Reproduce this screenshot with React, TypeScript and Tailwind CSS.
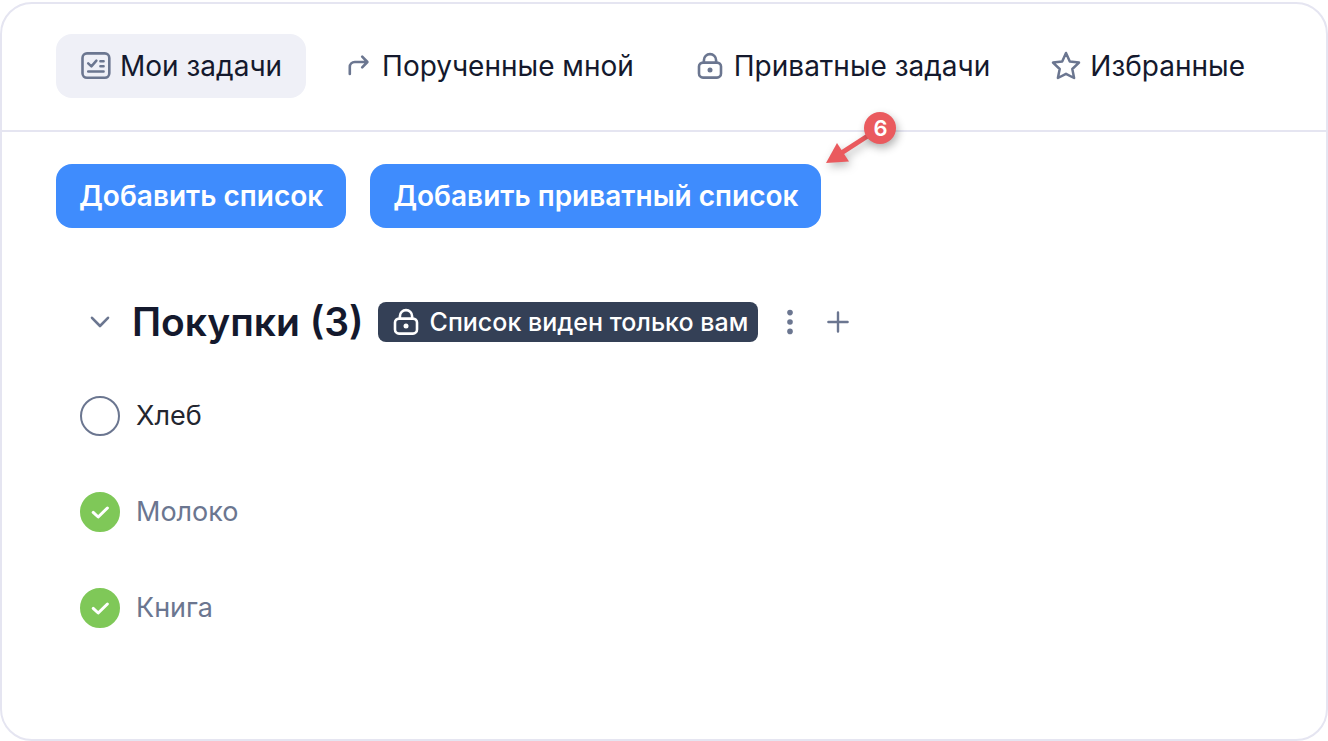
import { useState, type ReactNode } from "react";
import clsx from "clsx";

type IconProps = { className?: string };

function TasksIcon({ className }: IconProps) {
  return (
    <svg viewBox="0 0 32 32" fill="none" stroke="currentColor" strokeWidth="2.6" strokeLinecap="round" strokeLinejoin="round" className={className} aria-hidden="true">
      <rect x="2.5" y="3.4" width="26.8" height="24.4" rx="4.5" />
      <path d="M8.2 13.4l3.2 3 5-5.8M20.4 11.2h3.2M20.4 16.2h3.2M8.2 21.4h15.4" strokeWidth="2.5" />
    </svg>
  );
}

function ForwardIcon({ className }: IconProps) {
  return (
    <svg viewBox="0 0 32 32" fill="none" stroke="currentColor" strokeWidth="2.6" strokeLinecap="round" strokeLinejoin="round" className={className} aria-hidden="true">
      <path d="M7.8 24V17a5 5 0 0 1 5-5h12.2M20.2 6.6l5.2 5.4-5.2 5.4" />
    </svg>
  );
}

function LockIcon({ className }: IconProps) {
  return (
    <svg viewBox="0 0 32 32" fill="none" stroke="currentColor" strokeWidth="2.6" strokeLinecap="round" strokeLinejoin="round" className={className} aria-hidden="true">
      <rect x="5" y="12.6" width="22" height="15" rx="4" />
      <path d="M9.9 12.4v-2.2a6.1 6.1 0 0 1 12.2 0v2.2" />
      <circle cx="16" cy="20" r="2.5" fill="currentColor" stroke="none" />
    </svg>
  );
}

function StarIcon({ className }: IconProps) {
  return (
    <svg viewBox="0 0 32 32" fill="none" stroke="currentColor" strokeWidth="2.5" strokeLinejoin="round" className={className} aria-hidden="true">
      <path d="M16 3l3.8 8.5 9.2 1.1-6.7 6.4 1.8 9L16 23.8 7.9 28l1.8-9L3 12.6l9.2-1.1z" />
    </svg>
  );
}

const TABS: { id: string; label: string; icon: ReactNode }[] = [
  { id: "my", label: "Мои задачи", icon: <TasksIcon className="size-8 shrink-0 text-[#6b7690]" /> },
  { id: "assigned", label: "Порученные мной", icon: <ForwardIcon className="size-8 shrink-0 text-[#6b7690]" /> },
  { id: "private", label: "Приватные задачи", icon: <LockIcon className="size-8 shrink-0 text-[#6b7690]" /> },
  { id: "favorite", label: "Избранные", icon: <StarIcon className="size-8 shrink-0 text-[#6b7690]" /> },
];

const ITEMS = [
  { id: "bread", title: "Хлеб", done: false },
  { id: "milk", title: "Молоко", done: true },
  { id: "book", title: "Книга", done: true },
];

function Tabs() {
  const [active, setActive] = useState("my");
  return (
    <nav className="flex gap-3 border-b-2 border-[#e5e5f1] px-[54px] pt-[30px] pb-8">
      {TABS.map((tab) => (
        <button
          key={tab.id}
          type="button"
          onClick={() => setActive(tab.id)}
          className={clsx(
            "flex h-16 items-center gap-2 rounded-2xl px-6 whitespace-nowrap text-[#14192d]",
            active === tab.id && "bg-[#eff0f7]",
          )}
        >
          {tab.icon}
          {tab.label}
        </button>
      ))}
    </nav>
  );
}

// numbered marker pointing at the corner of the control it sits in
function Marker({ value }: { value: number }) {
  return (
    <div className="pointer-events-none absolute bottom-full left-full h-16 w-20 text-[#ea5a5e]">
      <svg viewBox="0 0 80 64" className="size-full overflow-visible drop-shadow-[2px_4px_4px_rgba(0,0,0,0.25)]" aria-hidden="true">
        <path d="M59 28L18 54.5" stroke="currentColor" strokeWidth="5" />
        <path d="M5 63L16 43L28 61.5z" fill="currentColor" />
      </svg>
      <span className="absolute top-3 left-[43px] flex size-8 items-center justify-center rounded-full bg-[#ea5a5e] text-[22px] leading-8 font-semibold text-white shadow-[2px_4px_8px_rgba(0,0,0,0.3)]">
        {value}
      </span>
    </div>
  );
}

function TaskRow({ id, title, done }: { id: string; title: string; done: boolean }) {
  const [checked, setChecked] = useState(done);
  return (
    <li className="flex items-center gap-4">
      <span className="relative size-10 shrink-0">
        <input
          id={id}
          type="checkbox"
          checked={checked}
          onChange={(e) => setChecked(e.target.checked)}
          className="block size-10 appearance-none rounded-full border-2 border-[#6b7690] checked:border-[#7fc858] checked:bg-[#7fc858]"
        />
        {checked && (
          <svg viewBox="0 0 40 40" fill="none" stroke="white" strokeWidth="3" strokeLinecap="round" strokeLinejoin="round" className="pointer-events-none absolute inset-0" aria-hidden="true">
            <path d="M13.2 20.4l5 4.6 9.2-9" />
          </svg>
        )}
      </span>
      <label htmlFor={id} className={clsx("text-[27px]", checked ? "text-[#6b7690]" : "text-[#23262f]")}>
        {title}
      </label>
    </li>
  );
}

export default function App() {
  const [open, setOpen] = useState(true);
  return (
    <div className="flex min-h-screen flex-col bg-white pt-[2px] font-['Inter',sans-serif] text-[28px] leading-10">
      <main className="flex-1 rounded-[32px] border-2 border-[#e5e5f1]">
        <Tabs />
        <div className="flex gap-6 px-[54px] pt-8">
          <button type="button" className="h-16 rounded-2xl bg-[#3f8cfd] px-[23px] font-semibold whitespace-nowrap text-white">
            Добавить список
          </button>
          <div className="relative">
            <button type="button" className="h-16 rounded-2xl bg-[#3f8cfd] px-[23px] font-semibold whitespace-nowrap text-white">
              Добавить приватный список
            </button>
            <Marker value={6} />
          </div>
        </div>

        <section className="px-[78px] pt-[70px] pb-16">
          <div className="flex items-center">
            <button type="button" aria-label="Свернуть" aria-expanded={open} onClick={() => setOpen(!open)} className="size-10 text-[#6b7690]">
              <svg viewBox="0 0 40 40" fill="none" stroke="currentColor" strokeWidth="2.6" strokeLinecap="round" strokeLinejoin="round" aria-hidden="true">
                <path d="M12 15.8l8 8.2 8-8.2" />
              </svg>
            </button>
            <h2 className="ml-3 text-[39px] leading-12 font-semibold whitespace-nowrap text-[#14192d]">Покупки (3)</h2>
            <span className="ml-[14px] flex h-10 items-center gap-2 rounded-lg bg-[#344056] pr-[10px] pl-3 text-[25px] font-medium whitespace-nowrap text-white">
              <LockIcon className="size-8 shrink-0" />
              Список виден только вам
            </span>
            <button type="button" aria-label="Меню" className="ml-3 size-10 text-[#6b7690]">
              <svg viewBox="0 0 40 40" fill="currentColor" aria-hidden="true">
                <circle cx="20" cy="10.6" r="2.8" />
                <circle cx="20" cy="20" r="2.8" />
                <circle cx="20" cy="29.4" r="2.8" />
              </svg>
            </button>
            <button type="button" aria-label="Добавить" className="ml-2 size-10 text-[#6b7690]">
              <svg viewBox="0 0 40 40" fill="none" stroke="currentColor" strokeWidth="2.4" strokeLinecap="round" aria-hidden="true">
                <path d="M20 10.4v19.2M10.4 20h19.2" />
              </svg>
            </button>
          </div>
          {open && (
            <ul className="mt-[50px] flex flex-col gap-14">
              {ITEMS.map((item) => (
                <TaskRow key={item.id} {...item} />
              ))}
            </ul>
          )}
        </section>
      </main>
    </div>
  );
}
